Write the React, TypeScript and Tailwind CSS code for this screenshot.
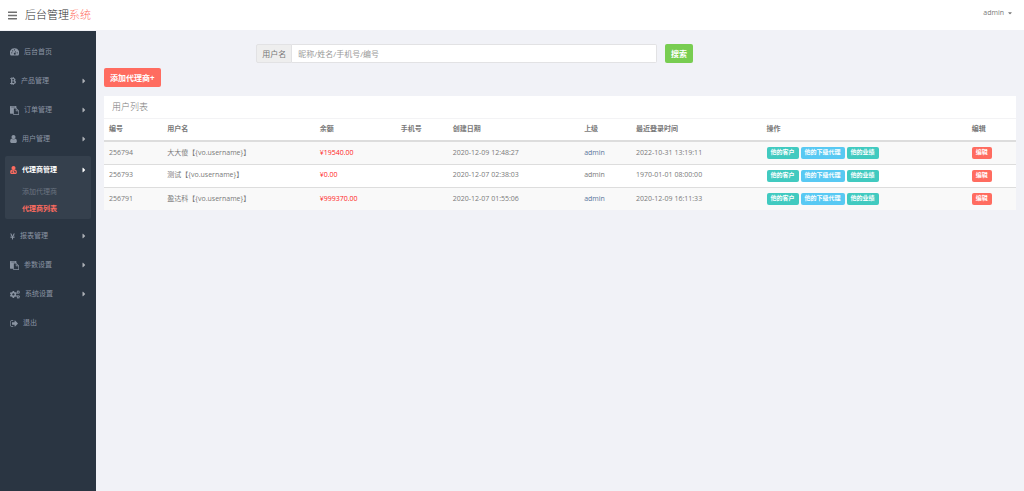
import { FaBtc, FaYenSign, FaCogs, FaBars, FaCaretRight, FaCaretDown } from "react-icons/fa";
import type { ReactNode } from "react";

function Dashboard() {
  return (
    <svg viewBox="0 0 18 15" className="h-[8px] w-[9px]" fill="currentColor">
      <path fillRule="evenodd" d="M9 0a9 9 0 0 1 7.600 14.500H1.400A9 9 0 0 1 9 0ZM3.600 8a1.200 1.200 0 1 0 0 2.400 1.200 1.200 0 0 0 0-2.400Zm1.800-4a1.200 1.200 0 1 0 0 2.400 1.200 1.200 0 0 0 0-2.400ZM9 2a1.200 1.200 0 1 0 0 2.400A1.200 1.200 0 0 0 9 2Zm1.600 3.500-1.100 3.600a1.900 1.900 0 1 0 1.100.3l1-3.600ZM14.400 8a1.200 1.200 0 1 0 0 2.400 1.200 1.200 0 0 0 0-2.400Z" />
    </svg>
  );
}

function Paste() {
  return (
    <svg viewBox="0 0 1792 1792" className="h-[9px] w-[9px]" fill="currentColor">
      <path d="M768 1664h896v-640h-416q-40 0-68-28t-28-68v-416h-384v1152zm256-1440v-64q0-13-9.500-22.500t-22.500-9.500h-704q-13 0-22.500 9.500t-9.500 22.500v64q0 13 9.500 22.500t22.500 9.500h704q13 0 22.500-9.500t9.500-22.500zm256 672h299l-299-299v299zm512 128v672q0 40-28 68t-68 28h-960q-40 0-68-28t-28-68v-160h-544q-40 0-68-28t-28-68v-1344q0-40 28-68t68-28h1088q40 0 68 28t28 68v328q21 13 36 28l408 408q28 28 48 76t20 88z" />
    </svg>
  );
}

function User() {
  return (
    <svg viewBox="0 128 1280 1536" className="h-[8px] w-[7px]" fill="currentColor">
      <path d="M1280 1399q0 109-62.500 187t-150.500 78h-854q-88 0-150.500-78t-62.500-187q0-85 8.500-160.500t31.500-152 58.500-131 94-89 134.500-34.500q131 128 313 128t313-128q76 0 134.500 34.500t94 89 58.500 131 31.500 152 8.500 160.500zM1024 512q0 159-112.500 271.500t-271.500 112.500-271.500-112.500-112.500-271.500 112.500-271.500 271.500-112.500 271.500 112.500 112.500 271.500z" />
    </svg>
  );
}

function Doctor() {
  return (
    <svg viewBox="0 128 1280 1536" className="h-[8px] w-[7px] text-[#ff6c60]" fill="currentColor">
      <path fillRule="evenodd" d="M1280 1399q0 109-62.500 187t-150.500 78h-854q-88 0-150.500-78t-62.500-187q0-85 8.500-160.500t31.500-152 58.500-131 94-89 134.500-34.500q131 128 313 128t313-128q76 0 134.500 34.500t94 89 58.500 131 31.500 152 8.500 160.500zM340 1000v240a110 110 0 1 0 80 0v-180ZM860 1000v110q-140 30-140 200v140h90v-140q0-100 90-100t90 100v140h90v-140q0-170-140-200v-110Z" />
      <path d="M1024 512q0 159-112.500 271.500t-271.500 112.500-271.500-112.500-112.500-271.500 112.500-271.500 271.500-112.500 271.500 112.500 112.500 271.500z" />
    </svg>
  );
}

function SignOut() {
  return (
    <svg viewBox="0 192 1568 1408" className="h-[7px] w-[8px]" fill="currentColor">
      <path d="M640 1440q0 4 1 20t.5 26.500-3 23.500-10 19.500-20.500 6.500h-320q-119 0-203.500-84.500t-84.500-203.500v-704q0-119 84.500-203.500t203.500-84.500h320q13 0 22.500 9.500t9.500 22.500q0 4 1 20t.5 26.500-3 23.500-10 19.500-20.500 6.500h-320q-66 0-113 47t-47 113v704q0 66 47 113t113 47h312l11.500 1 11.500 3 8 5.500 7 9 2 13.500zm928-544q0 26-19 45l-544 544q-19 19-45 19t-45-19-19-45v-288h-448q-26 0-45-19t-19-45v-384q0-26 19-45t45-19h448v-288q0-26 19-45t45-19 45 19l544 544q19 19 19 45z" />
    </svg>
  );
}

type Item = { label: string; icon: ReactNode; arrow?: boolean };

const before: Item[] = [
  { label: "后台首页", icon: <Dashboard /> },
  { label: "产品管理", icon: <FaBtc className="h-[8px] w-[6px]" />, arrow: true },
  { label: "订单管理", icon: <Paste />, arrow: true },
  { label: "用户管理", icon: <User />, arrow: true },
];
const after: Item[] = [
  { label: "报表管理", icon: <FaYenSign className="h-[7px] w-[5px]" />, arrow: true },
  { label: "参数设置", icon: <Paste />, arrow: true },
  { label: "系统设置", icon: <FaCogs className="h-[9px] w-[10px]" />, arrow: true },
  { label: "退出", icon: <SignOut /> },
];

function NavItem({ item }: { item: Item }) {
  return (
    <li>
      <a href="#" className="flex h-[24px] items-center gap-[5px] px-[5px]">
        {item.icon}
        <span>{item.label}</span>
        {item.arrow && <FaCaretRight className="ml-auto h-[8px] w-[4px] text-[#aeb2b7]" />}
      </a>
    </li>
  );
}

const rows = [
  { id: "256794", name: "大大傻", money: "19540.00", created: "2020-12-09 12:48:27", login: "2022-10-31 13:19:11", link: true },
  { id: "256793", name: "测试", money: "0.00", created: "2020-12-07 02:38:03", login: "1970-01-01 08:00:00", link: false },
  { id: "256791", name: "盈达科", money: "999370.00", created: "2020-12-07 01:55:06", login: "2020-12-09 16:11:33", link: true },
];

const columns = [
  { label: "编号", width: "w-[6.4%]" },
  { label: "用户名", width: "w-[16.7%]" },
  { label: "余额", width: "w-[8.9%]" },
  { label: "手机号", width: "w-[5.7%]" },
  { label: "创建日期", width: "w-[14.4%]" },
  { label: "上级", width: "w-[5.7%]" },
  { label: "最近登录时间", width: "w-[14.3%]" },
  { label: "操作", width: "w-[22.5%]" },
  { label: "编辑", width: "w-[5.4%]" },
];

const tag = "flex h-[12px] items-center rounded-[2px] px-[4px] text-[6px] font-bold text-white";

export default function App() {
  return (
    <div className="flex min-h-screen flex-col bg-[#f1f2f7] font-['Open_Sans','Noto_Sans_CJK_SC',sans-serif] text-[7px] text-[#797979]">
      <header className="flex h-[31px] items-center border-b border-[#f1f2f7] bg-white px-[8px]">
        <button aria-label="菜单" className="text-[#707070]">
          <FaBars className="h-[11px] w-[9px]" />
        </button>
        <a href="#" className="ml-[8px] text-[11px] font-light text-[#2e2e2e]">
          后台管理<span className="text-[#ff6c60]">系统</span>
        </a>
        <button className="mb-[4px] ml-auto flex items-center gap-[4px] pr-[4px]">
          admin
          <FaCaretDown className="h-[6px] w-[4px]" />
        </button>
      </header>
      <div className="flex grow">
        <nav className="w-[96px] shrink-0 bg-[#2a3542] px-[5px] pt-[9px] text-[#8a94a2]">
          <ul className="flex flex-col gap-[5px]">
            {before.map((item) => <NavItem key={item.label} item={item} />)}
            <li className="rounded-[2px] bg-[#35404d]">
              <a href="#" className="flex h-[28px] items-center gap-[5px] px-[5px] font-bold text-white">
                <Doctor />
                <span>代理商管理</span>
                <FaCaretRight className="ml-auto h-[8px] w-[4px]" />
              </a>
              <ul className="pl-[17px]">
                <li><a href="#" className="flex h-[16px] items-center text-[#6b7481]">添加代理商</a></li>
                <li><a href="#" className="flex h-[19px] items-center font-bold text-[#ff6c60]">代理商列表</a></li>
              </ul>
            </li>
            {after.map((item) => <NavItem key={item.label} item={item} />)}
          </ul>
        </nav>
        <main className="min-w-0 grow px-[8px] pt-[13px]">
          <form className="flex pl-[16.7%] text-[8px]" onSubmit={(e) => e.preventDefault()}>
            <label htmlFor="keyword" className="flex h-[19px] items-center rounded-l-[2px] border border-[#e2e2e4] bg-[#eee] px-[5px] text-[#777]">用户名</label>
            <input id="keyword" placeholder="昵称/姓名/手机号/编号" className="h-[19px] w-[48%] rounded-r-[2px] border border-l-0 border-[#e2e2e4] bg-white px-[6px] outline-none placeholder:text-[#999]" />
            <button className="ml-[8px] h-[19px] rounded-[2px] bg-[#78cd51] px-[6px] font-bold text-white">搜索</button>
          </form>
          <button className="mt-[5px] flex h-[19px] items-center rounded-[2px] bg-[#ff6c60] px-[6px] text-[8px] font-bold text-white">添加代理商+</button>
          <section className="mt-[9px] bg-white">
            <h2 className="flex h-[23px] items-center border-b border-[#f3f3f5] px-[8px] text-[9px] font-light">用户列表</h2>
            <table className="w-full table-fixed text-left">
              <thead>
                <tr className="h-[22px] border-b-2 border-[#ddd]">
                  {columns.map((c) => <th key={c.label} className={`${c.width} px-[5px] font-bold`}>{c.label}</th>)}
                </tr>
              </thead>
              <tbody>
                {rows.map((r) => (
                  <tr key={r.id} className="h-[23px] border-t border-[#ddd] whitespace-nowrap odd:bg-[#f9f9f9]">
                    <td className="px-[5px]">{r.id}</td>
                    <td className="px-[5px]">{r.name}【{"{vo.username}"}】</td>
                    <td className="px-[5px] text-[#f22]">¥{r.money}</td>
                    <td />
                    <td className="px-[5px]">{r.created}</td>
                    <td className="px-[5px]"><a href="#" className={r.link ? "text-[#59779b]" : ""}>admin</a></td>
                    <td className="px-[5px]">{r.login}</td>
                    <td className="px-[5px]">
                      <div className="flex gap-[2px]">
                        <button className={`${tag} bg-[#41cac0]`}>他的客户</button>
                        <button className={`${tag} bg-[#58c9f3]`}>他的下级代理</button>
                        <button className={`${tag} bg-[#41cac0]`}>他的业绩</button>
                      </div>
                    </td>
                    <td className="px-[5px]"><button className={`${tag} bg-[#ff6c60]`}>编辑</button></td>
                  </tr>
                ))}
              </tbody>
            </table>
          </section>
        </main>
      </div>
    </div>
  );
}
